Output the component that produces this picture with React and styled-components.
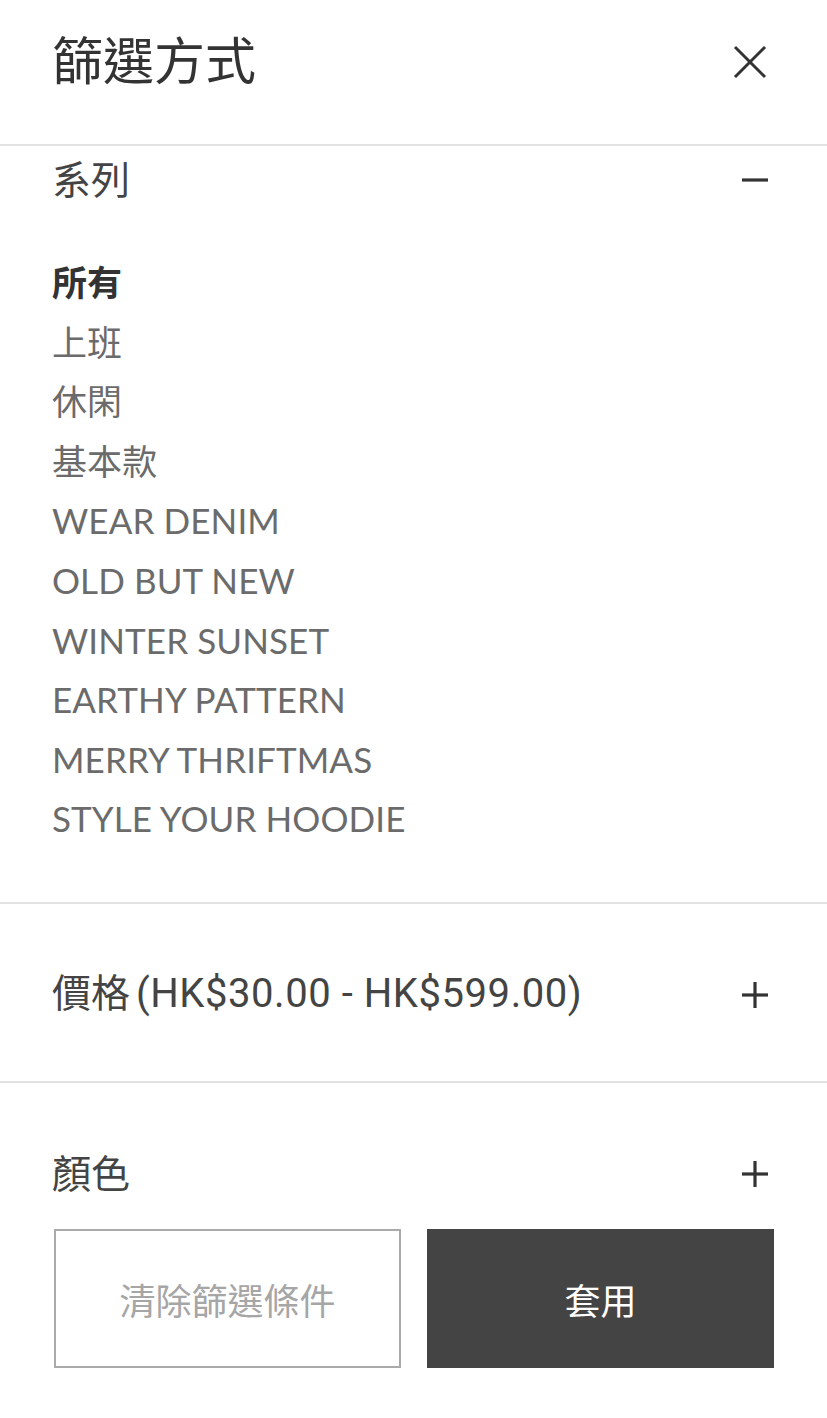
import React from 'react';
import styled, { createGlobalStyle } from 'styled-components';

const GlobalStyle = createGlobalStyle`
  html, body {
    margin: 0;
    padding: 0;
    background: #fff;
  }
  body {
    font-family: 'Noto Sans CJK TC', 'Noto Sans', sans-serif;
  }
`;

const Page = styled.div`
  width: 827px;
  height: 1418px;
  display: flex;
  flex-direction: column;
  background: #fff;
  overflow: hidden;
`;

const Header = styled.div`
  height: 146px;
  flex-shrink: 0;
  display: flex;
  justify-content: space-between;
  align-items: flex-start;
  padding: 28px 60px 0 52px;
  box-sizing: border-box;
  border-bottom: 2px solid #e2e2e2;
`;

const Title = styled.h1`
  margin: 0;
  font-family: 'Noto Sans CJK TC', sans-serif;
  font-size: 51px;
  line-height: 61px;
  font-weight: 400;
  color: #333;
`;

const CloseButton = styled.button`
  margin-top: 17px;
  width: 34px;
  height: 34px;
  padding: 0;
  border: 0;
  background: none;
  display: flex;
`;

const Body = styled.div`
  flex: 1;
  overflow: hidden;
`;

const Section = styled.section`
  border-top: ${(p) => (p.divided ? '2px solid #e2e2e2' : '0')};
  padding-bottom: ${(p) => p.bottom || 0}px;
`;

const SectionHead = styled.div`
  display: flex;
  align-items: center;
  justify-content: space-between;
  height: ${(p) => p.rowHeight}px;
  padding: 0 59px 0 52px;
  box-sizing: border-box;

  svg {
    margin-top: 6px;
  }
`;

const SectionTitle = styled.h2`
  margin: 0;
  font-family: 'Noto Sans CJK TC', sans-serif;
  font-size: 39px;
  line-height: 48px;
  font-weight: 400;
  color: #444;
`;

const Range = styled.span`
  font-family: Roboto, 'Noto Sans CJK TC', sans-serif;
  font-size: 40px;
  letter-spacing: 0.55px;
  margin-left: 6px;
`;

const List = styled.ul`
  list-style: none;
  margin: 0;
  padding: 45px 52px 0;
`;

const Option = styled.li`
  font-family: Lato, 'Noto Sans CJK TC', sans-serif;
  font-size: 35px;
  line-height: 59.6px;
  height: 59.6px;
  color: ${(p) => (p.active ? '#333' : '#6b6b6b')};
  font-weight: ${(p) => (p.active ? 700 : 400)};
  letter-spacing: 0.1px;
`;

const Footer = styled.div`
  flex-shrink: 0;
  display: grid;
  grid-template-columns: 347px 347px;
  gap: 26px;
  padding: 24px 53px 50px 54px;
  background: #fff;
`;

const ActionButton = styled.button`
  height: 139px;
  box-sizing: border-box;
  font-family: 'Noto Sans CJK TC', sans-serif;
  font-size: 36px;
  font-weight: 400;
  border: ${(p) => (p.primary ? '0' : '2px solid #aaa')};
  background: ${(p) => (p.primary ? '#444' : '#fff')};
  color: ${(p) => (p.primary ? '#fff' : '#a6a6a6')};
  padding: 0;
`;

const CloseIcon = () => (
  <svg width="34" height="34" viewBox="0 0 34 34">
    <path d="M2 2 L32 32 M32 2 L2 32" stroke="#333" strokeWidth="3" fill="none" />
  </svg>
);

const Toggle = ({ open }) => (
  <svg width="26" height="26" viewBox="0 0 26 26">
    <path d="M0 13 H26" stroke="#333" strokeWidth="3.2" />
    {!open && <path d="M13 0 V26" stroke="#333" strokeWidth="3.2" />}
  </svg>
);

const series = [
  '所有',
  '上班',
  '休閑',
  '基本款',
  'WEAR DENIM',
  'OLD BUT NEW',
  'WINTER SUNSET',
  'EARTHY PATTERN',
  'MERRY THRIFTMAS',
  'STYLE YOUR HOODIE',
];

export default function App() {
  return (
    <Page>
      <GlobalStyle />
      <Header>
        <Title>篩選方式</Title>
        <CloseButton aria-label="close">
          <CloseIcon />
        </CloseButton>
      </Header>
      <Body>
        <Section bottom={53}>
          <SectionHead rowHeight={62}>
            <SectionTitle>系列</SectionTitle>
            <Toggle open />
          </SectionHead>
          <List>
            {series.map((name, i) => (
              <Option key={name} active={i === 0}>{name}</Option>
            ))}
          </List>
        </Section>
        <Section divided>
          <SectionHead rowHeight={177}>
            <SectionTitle>
              價格
              <Range>(HK$30.00 - HK$599.00)</Range>
            </SectionTitle>
            <Toggle />
          </SectionHead>
        </Section>
        <Section divided>
          <SectionHead rowHeight={177}>
            <SectionTitle>顏色</SectionTitle>
            <Toggle />
          </SectionHead>
        </Section>
      </Body>
      <Footer>
        <ActionButton>清除篩選條件</ActionButton>
        <ActionButton primary>套用</ActionButton>
      </Footer>
    </Page>
  );
}
